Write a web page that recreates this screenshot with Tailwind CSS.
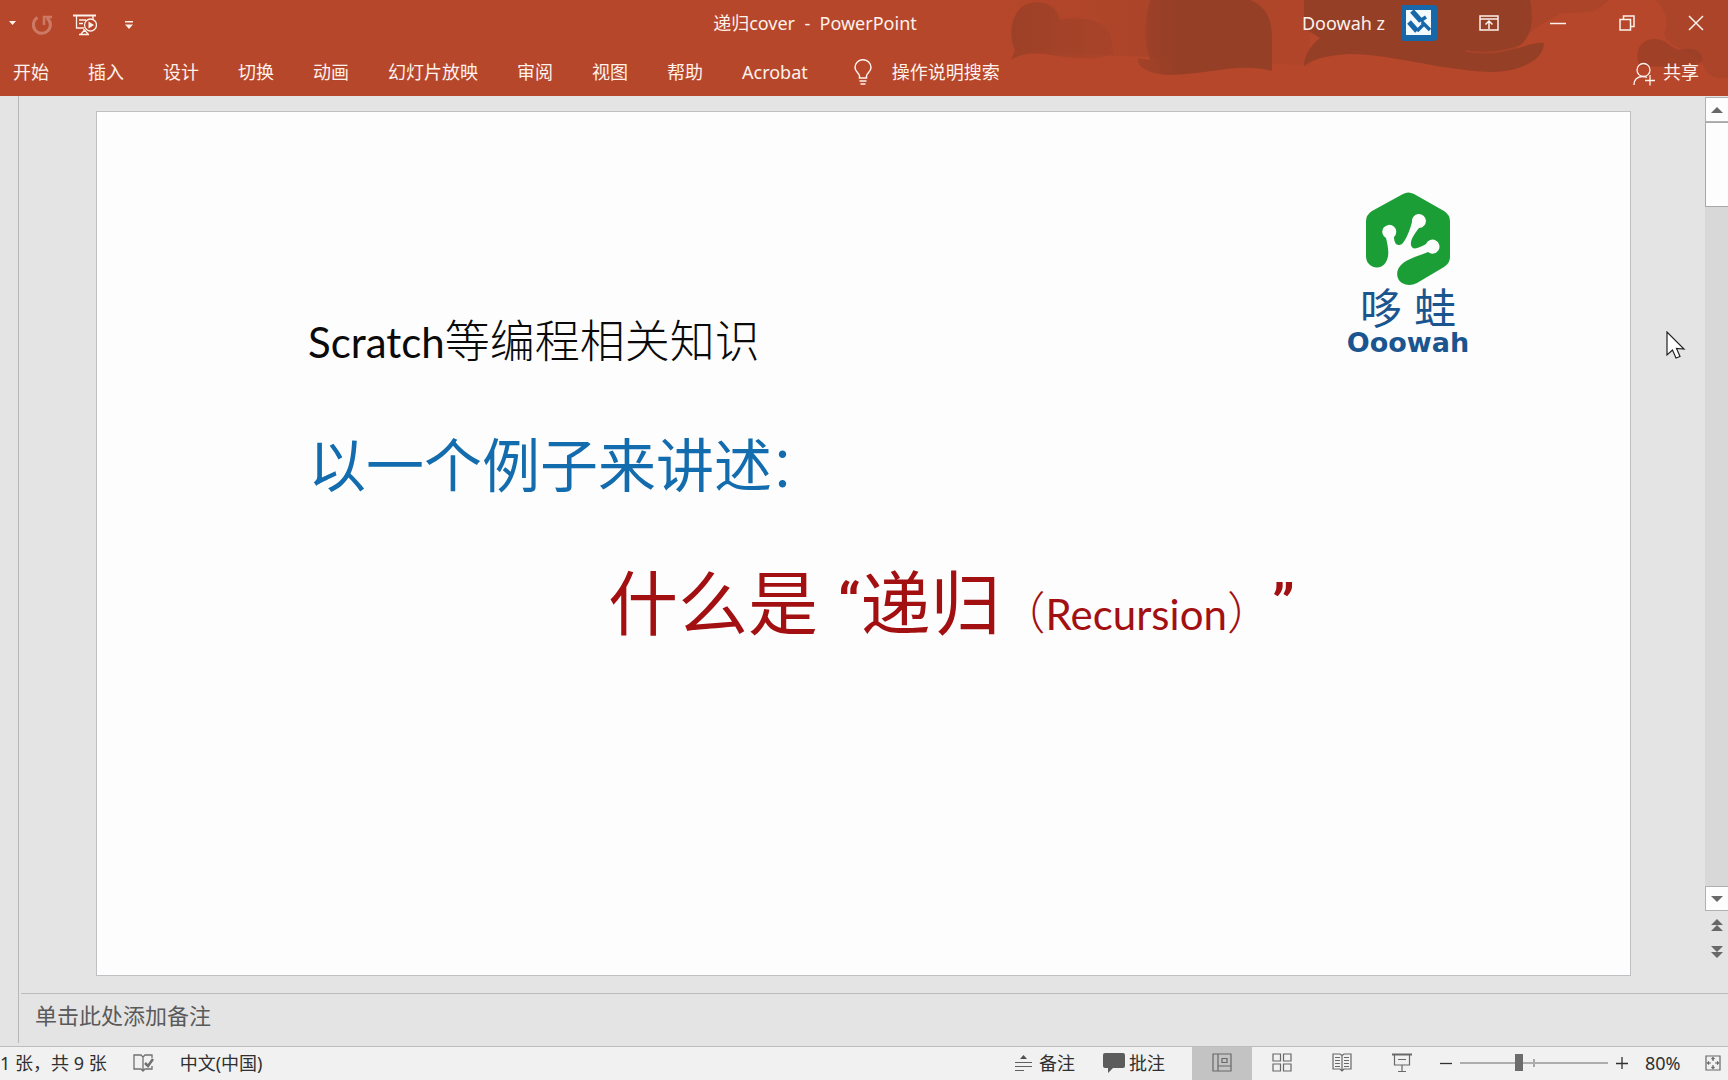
<!DOCTYPE html>
<html lang="zh-CN">
<head>
<meta charset="utf-8">
<title>递归cover - PowerPoint</title>
<script src="https://cdn.jsdelivr.net/npm/@tailwindcss/browser@4"></script>
</head>
<body class="flex h-screen flex-col overflow-hidden bg-[#e4e4e4] font-['Noto_Sans','Noto_Sans_CJK_SC',sans-serif] text-lg leading-6">

<header class="relative h-24 shrink-0 bg-[#b7472a] text-[#fdf1ec]">
  <!-- Office background artwork -->
  <svg class="absolute top-0 right-0 h-24 w-[748px]" viewBox="980 0 748 96" fill="#963f27" aria-hidden="true">
    <defs>
      <linearGradient id="fade" x1="0" x2="1"><stop offset="0" stop-color="#963f27" stop-opacity=".8"/><stop offset="1" stop-color="#963f27" stop-opacity=".25"/></linearGradient>
      <linearGradient id="haze" x1="0" x2="1"><stop offset="0" stop-color="#963f27" stop-opacity="0"/><stop offset=".5" stop-color="#963f27" stop-opacity=".35"/><stop offset="1" stop-color="#963f27" stop-opacity=".2"/></linearGradient>
      <linearGradient id="edge" x1="0" x2="1"><stop offset="0" stop-color="#963f27" stop-opacity=".6"/><stop offset=".3" stop-color="#963f27"/></linearGradient>
    </defs>
    <path fill="url(#haze)" d="M980 0H1310V66C1220 60 1120 56 980 50Z"/>
    <path fill="url(#fade)" d="M1011 60L1015 50C1008 38 1010 8 1030 3C1046 0 1058 8 1060 20C1080 16 1105 20 1110 34C1113 44 1112 50 1114 53C1100 62 1072 58 1050 55C1035 52 1020 54 1011 60Z"/>
    <path fill="url(#edge)" d="M1150 0H1250C1270 8 1272 24 1272 40V71C1240 62 1210 74 1170 75C1150 74 1136 68 1138 58L1150 60C1144 44 1144 20 1150 0Z"/>
    <path d="M1304 0H1530C1536 30 1526 44 1514 49C1526 46 1536 42 1544 43C1544 60 1520 72 1490 72C1440 70 1390 54 1350 54C1330 55 1314 58 1304 66C1304 56 1310 46 1320 38L1304 28Z"/>
    <path fill="none" stroke="#b7472a" stroke-width="2" opacity=".5" d="M1466 51Q1494 56 1524 45"/>
    <path opacity=".35" d="M1530 0H1610C1600 6 1596 14 1582 12C1572 14 1564 12 1560 14C1550 20 1536 26 1530 34Z"/>
    <path opacity=".7" d="M1640 66C1632 48 1644 38 1656 39C1668 40 1670 48 1680 50C1694 46 1704 52 1702 62C1690 70 1660 66 1640 66Z"/>
    <path opacity=".35" d="M1656 0H1728V78C1716 80 1706 76 1702 62C1690 50 1668 48 1664 34C1670 20 1664 8 1656 0Z"/>
  </svg>

  <div class="relative flex h-[46px] items-center">
    <div class="flex w-[328px] shrink-0 items-center">
      <button aria-label="更多撤消" class="ml-2 w-[9px]"><svg class="h-[5px] w-[9px]" viewBox="0 0 9 5" fill="currentColor"><path d="M1 0H8L4.500 4Z"/></svg></button>
      <button aria-label="重复" class="mt-1 ml-[14px] opacity-30"><svg class="size-[22px]" viewBox="0 0 22 22" fill="none" stroke="currentColor" stroke-width="3"><path d="M6.500 3.500A8.500 8.500 0 1 0 16 4"/><path d="M13 11V3H21" stroke-width="2.500"/></svg></button>
      <button aria-label="从头开始放映" class="mt-1 ml-5"><svg class="h-[22px] w-6" viewBox="0 0 24 22" fill="none" stroke="currentColor" stroke-width="1.300"><path d="M0 1.500H23" stroke-width="2"/><path d="M3.500 2V14H11M20 2V5M6 6H13M6 9.500H10M11 15V18M6 20.500H16M8 20L11.500 16L15 20"/><circle cx="17.500" cy="11" r="6"/><path d="M15.500 7.500L21 11L15.500 14.500Z" fill="currentColor" stroke="none"/></svg></button>
      <button aria-label="自定义快速访问工具栏" class="mt-1 ml-7"><svg class="h-2 w-2" viewBox="0 0 8 8" fill="currentColor"><path d="M0 0H8V1.500H0ZM0 3.500H8L4 8Z"/></svg></button>
    </div>
    <h1 class="flex-1 text-center whitespace-pre">递归cover  -  PowerPoint</h1>
    <a href="#" class="flex shrink-0 items-center gap-4 pr-[17px] text-inherit">Doowah z
      <svg class="size-9" viewBox="0 0 36 36" aria-hidden="true"><rect width="36" height="36" rx="3" fill="#1767a9"/><rect x="5" y="5" width="25" height="25" fill="#f4fbff"/><path fill="none" stroke="#1767a9" stroke-width="5" d="M11 6L20 16M8 17L16 26"/><path fill="none" stroke="#1767a9" stroke-width="3.500" d="M19 16L25 12M16 26L22 20M21 17L29 25"/></svg>
    </a>
    <div class="-mr-0.5 flex shrink-0">
      <button aria-label="功能区显示选项" class="flex w-[69px] justify-center"><svg class="h-4 w-5" viewBox="0 0 20 16" fill="none" stroke="currentColor" stroke-width="1.500"><path d="M1 1H19V15H1ZM1 4H19M10 14V6.500M6.500 9.500L10 6L13.500 9.500"/></svg></button>
      <button aria-label="最小化" class="flex w-[69px] items-center justify-center"><svg class="h-4 w-4" viewBox="0 0 16 16" stroke="currentColor" stroke-width="1.500"><path d="M0 8.500H16"/></svg></button>
      <button aria-label="向下还原" class="flex w-[69px] justify-center"><svg class="h-4 w-4" viewBox="0 0 16 16" fill="none" stroke="currentColor" stroke-width="1.500"><path d="M1 4.500H11.500V15H1ZM4.500 4V1H15V11.500H12"/></svg></button>
      <button aria-label="关闭" class="flex w-[69px] justify-center"><svg class="h-4 w-4" viewBox="0 0 16 16" stroke="currentColor" stroke-width="1.500"><path d="M1 1L15 15M15 1L1 15"/></svg></button>
    </div>
  </div>

  <nav class="relative flex h-[50px] items-center gap-[39px] pt-0.5 pr-[29px] pl-[13px] whitespace-nowrap">
    <button>开始</button><button>插入</button><button>设计</button><button>切换</button><button>动画</button><button>幻灯片放映</button><button>审阅</button><button>视图</button><button>帮助</button><button>Acrobat</button>
    <label class="ml-[7px] flex items-center gap-5">
      <svg class="h-[26px] w-[18px]" viewBox="0 0 18 26" fill="none" stroke="currentColor" stroke-width="1.500"><path d="M5.500 19V17C5.500 14 1 13 1 8.500A8 7.800 0 0 1 17 8.500C17 13 12.500 14 12.500 17V19ZM5.500 22H12.500M6.500 25H11.500"/></svg>
      <input type="text" aria-label="操作说明搜索" placeholder="操作说明搜索" class="w-40 bg-transparent outline-none placeholder:text-[#fdf1ec]">
    </label>
    <button class="ml-auto flex items-center gap-2"><svg class="mt-1 h-6 w-[22px]" viewBox="0 0 22 24" fill="none" stroke="currentColor" stroke-width="1.300"><circle cx="10.500" cy="8" r="6.500"/><path d="M1 23C1 17 5 14.500 10 14.500C12 14.500 13 15 14 15.500M17 13V23.500M12 18.500H22"/></svg>共享</button>
  </nav>
</header>

<main class="flex min-h-0 flex-1">
  <div class="mb-[3px] w-[19px] shrink-0 border-r border-[#b8b8b8]"></div>
  <div class="flex min-w-0 flex-1 flex-col">
    <div class="flex min-h-0 flex-1">
      <div class="min-w-0 flex-1 pt-[15px] pr-[74px] pl-[77px]">
        <article class="relative aspect-[1535/865] w-full border border-[#c0c0c4] bg-[#fdfdfd]">
          <div class="pt-[195px] pl-[211px] whitespace-nowrap">
            <p class="flex h-16 items-baseline text-[45px] leading-16 font-light text-[#0a0a0a]"><span class="font-['Lato'] text-[42px] font-normal">Scratch</span><span class="font-['Noto_Sans_CJK_SC']">等编程相关知识</span></p>
            <p class="mt-[51px] flex h-20 items-center font-['Noto_Sans_CJK_SC'] text-[58px] leading-none text-[#126cad]">以一个例子来讲述<span class="-ml-1 font-light">：</span></p>
            <p class="mt-[50px] ml-[300px] flex h-24 items-baseline font-['Noto_Sans_CJK_SC'] text-[70px] leading-24 text-[#a31012]"><span>什么是</span><span class="ml-5 self-start font-['Roboto'] text-[56px] leading-[104px] font-bold">“</span><span>递归</span><span class="text-[45px] font-light">（</span><span class="font-['Lato'] text-[42px]">Recursion</span><span class="text-[45px] font-light">）</span><span class="self-start font-['Roboto'] text-[56px] leading-[104px] font-bold">”</span></p>
          </div>
          <figure class="absolute top-[80px] right-[160px] flex w-[124px] flex-col items-center text-[#1a5590]">
            <svg class="h-[93px] w-[84px]" viewBox="65 21 84 93" aria-label="哆蛙">
              <path fill="#1b9e35" d="M102 23Q107 20 113 23L143 40Q149 44 149 50V86Q149 92 143 96L116 112Q108 116 101 112C94 107 95 98 101 93C108 87 120 84 127 81A7 7 0 1 0 125 73C118 77 111 80 110 74C109 69 114 62 118 57A7 7 0 1 0 111 51C109 59 105 69 101 73C96 76 93 72 93 66A7 7 0 1 0 85 67C87 76 89 84 85 91C81 98 72 98 68 93Q65 90 65 85V50Q65 44 71 40Z"/>
            </svg>
            <div class="flex h-[42px] items-center gap-3 font-['Noto_Sans_CJK_SC'] text-[42px] leading-none"><span>哆</span><span>蛙</span></div>
            <figcaption class="pt-0.5 font-['DejaVu_Sans'] text-[27px] font-bold leading-7">Ooowah</figcaption>
          </figure>
        </article>
      </div>
      <div class="flex w-[23px] shrink-0 flex-col pt-px text-[#686868]">
        <button aria-label="向上滚动" class="flex h-[25px] items-center justify-center border border-r-0 border-[#b0b0b0] bg-[#fdfdfd]"><svg class="h-1.5 w-3" viewBox="0 0 12 6" fill="currentColor"><path d="M0 6L6 0L12 6Z"/></svg></button>
        <div class="flex-1 bg-[#d8d8d8]"><div class="h-[85px] border border-r-0 border-[#a8a8a8] bg-[#fdfdfd]"></div></div>
        <button aria-label="向下滚动" class="flex h-[25px] items-center justify-center border border-r-0 border-[#b0b0b0] bg-[#fdfdfd]"><svg class="h-1.5 w-3" viewBox="0 0 12 6" fill="currentColor"><path d="M0 0L6 6L12 0Z"/></svg></button>
        <button aria-label="上一张幻灯片" class="flex h-[27px] items-center justify-center"><svg class="h-3 w-3" viewBox="0 0 12 12" fill="currentColor"><path d="M0 6L6 0L12 6ZM0 12L6 6L12 12Z"/></svg></button>
        <button aria-label="下一张幻灯片" class="mb-7 flex h-[27px] items-center justify-center"><svg class="h-3 w-3" viewBox="0 0 12 12" fill="currentColor"><path d="M0 0L6 6L12 0ZM0 6L6 12L12 6Z"/></svg></button>
      </div>
    </div>
    <div class="ml-0.5 h-[53px] shrink-0 border-t border-[#bcbcbc]">
      <textarea aria-label="备注" placeholder="单击此处添加备注" class="block h-12 w-full resize-none bg-transparent pt-[7px] pl-[14px] text-[22px] leading-7 outline-none placeholder:text-[#5a5a5a]"></textarea>
    </div>
  </div>
</main>

<footer class="flex h-[34px] shrink-0 items-center border-t border-[#bdbdbd] bg-[#f1f1f1] pb-0.5 whitespace-nowrap text-[#303030]">
  <span>1 张，共 9 张</span>
  <button aria-label="拼写检查" class="ml-[26px] text-[#707070]"><svg class="h-[18px] w-[21px]" viewBox="0 0 21 18" fill="none" stroke="currentColor" stroke-width="1.300"><path d="M10 16V3L8 1H1V15H8L10 17L12 15H19V12M10 3L12 1H19V4"/><path d="M12 9L15 12L20 5" stroke-width="2.500"/></svg></button>
  <button class="ml-[26px]">中文(中国)</button>
  <button class="ml-auto flex items-center gap-[7px]"><svg class="h-[18px] w-[17px]" viewBox="0 0 17 18" fill="none" stroke="#606060" stroke-width="1.200"><path d="M0 8.500H17M0 12.500H17M0 16.500H9"/><path d="M5 5L8.500 1L12 5Z" fill="#505050" stroke="none"/></svg>备注</button>
  <button class="ml-7 flex items-center gap-1"><svg class="h-5 w-[22px]" viewBox="0 0 22 20" fill="#5c5c5c"><path d="M2 0H20Q22 0 22 2V13Q22 15 20 15H10L5 20V15H2Q0 15 0 13V2Q0 0 2 0Z"/></svg>批注</button>
  <div class="-mb-0.5 ml-[27px] flex self-stretch text-[#686868]">
    <button aria-label="普通视图" class="flex w-[60px] items-center justify-center bg-[#c3c3c3] pb-0.5"><svg class="size-5" viewBox="0 0 20 20" fill="none" stroke="currentColor" stroke-width="1.200"><path d="M1 1H19V18H1ZM6 1V18M6 13H19M10 5.500H15V9.500H10Z"/></svg></button>
    <button aria-label="幻灯片浏览" class="flex w-[60px] items-center justify-center pb-0.5"><svg class="size-5" viewBox="0 0 20 20" fill="none" stroke="currentColor" stroke-width="1.200"><path d="M1 1H8.500V8H1ZM11.500 1H19V8H11.500ZM1 11H8.500V18H1ZM11.500 11H19V18H11.500Z"/></svg></button>
    <button aria-label="阅读视图" class="flex w-[60px] items-center justify-center pb-0.5"><svg class="size-5" viewBox="0 0 20 20" fill="none" stroke="currentColor" stroke-width="1.200"><path d="M10 2.500V18M10 2.500L8 1H1V16H8L10 18L12 16H19V1H12ZM3 4.500H8M3 7.500H8M3 10.500H8M3 13.500H8M12 4.500H17M12 7.500H17M12 10.500H17M12 13.500H17"/></svg></button>
    <button aria-label="幻灯片放映" class="flex w-[60px] items-center justify-center pb-0.5"><svg class="size-5" viewBox="0 0 20 20" fill="none" stroke="currentColor" stroke-width="1.200"><path d="M0 1.500H20" stroke-width="2"/><path d="M2.500 2V12H17.500V2M6 6.500H14M10 12V18M6 18.500H14"/></svg></button>
  </div>
  <button aria-label="缩小" class="ml-2"><svg class="size-3" viewBox="0 0 12 12" stroke="currentColor" stroke-width="1.300"><path d="M0 6.500H12"/></svg></button>
  <div class="relative ml-2 flex h-5 w-[148px] items-center">
    <span class="absolute left-[73px] h-2 w-0.5 bg-[#a8a8a8]"></span>
    <input type="range" min="0" max="100" value="39" aria-label="缩放" class="relative h-0.5 w-full appearance-none bg-[#adadad] [&::-webkit-slider-thumb]:h-[17px] [&::-webkit-slider-thumb]:w-2 [&::-webkit-slider-thumb]:appearance-none [&::-webkit-slider-thumb]:bg-[#6c6c6c]">
  </div>
  <button aria-label="放大" class="ml-2"><svg class="size-3" viewBox="0 0 12 12" stroke="currentColor" stroke-width="1.300"><path d="M0 6.500H12M6 0V12"/></svg></button>
  <button class="ml-[17px] w-10 text-left">80%</button>
  <button aria-label="使幻灯片适应当前窗口" class="mr-[7px] ml-5 text-[#686868]"><svg class="size-4" viewBox="0 0 16 16" fill="none" stroke="currentColor" stroke-width="1.200"><path d="M1 1H15V15H1ZM8 3V6M8 10V13M3 8H6M10 8H13M6.500 4L8 2.500L9.500 4M6.500 12L8 13.500L9.500 12M4 6.500L2.500 8L4 9.500M12 6.500L13.500 8L12 9.500"/></svg></button>
</footer>

<svg class="pointer-events-none absolute top-[331px] right-[42px] h-[29px] w-5" viewBox="0 0 20 29" fill="#fff" stroke="#222" stroke-width="1.200" aria-hidden="true"><path d="M1 1V24L6.500 19L10 27L14 25.500L10.500 17.500L18 18Z"/></svg>
</body>
</html>
